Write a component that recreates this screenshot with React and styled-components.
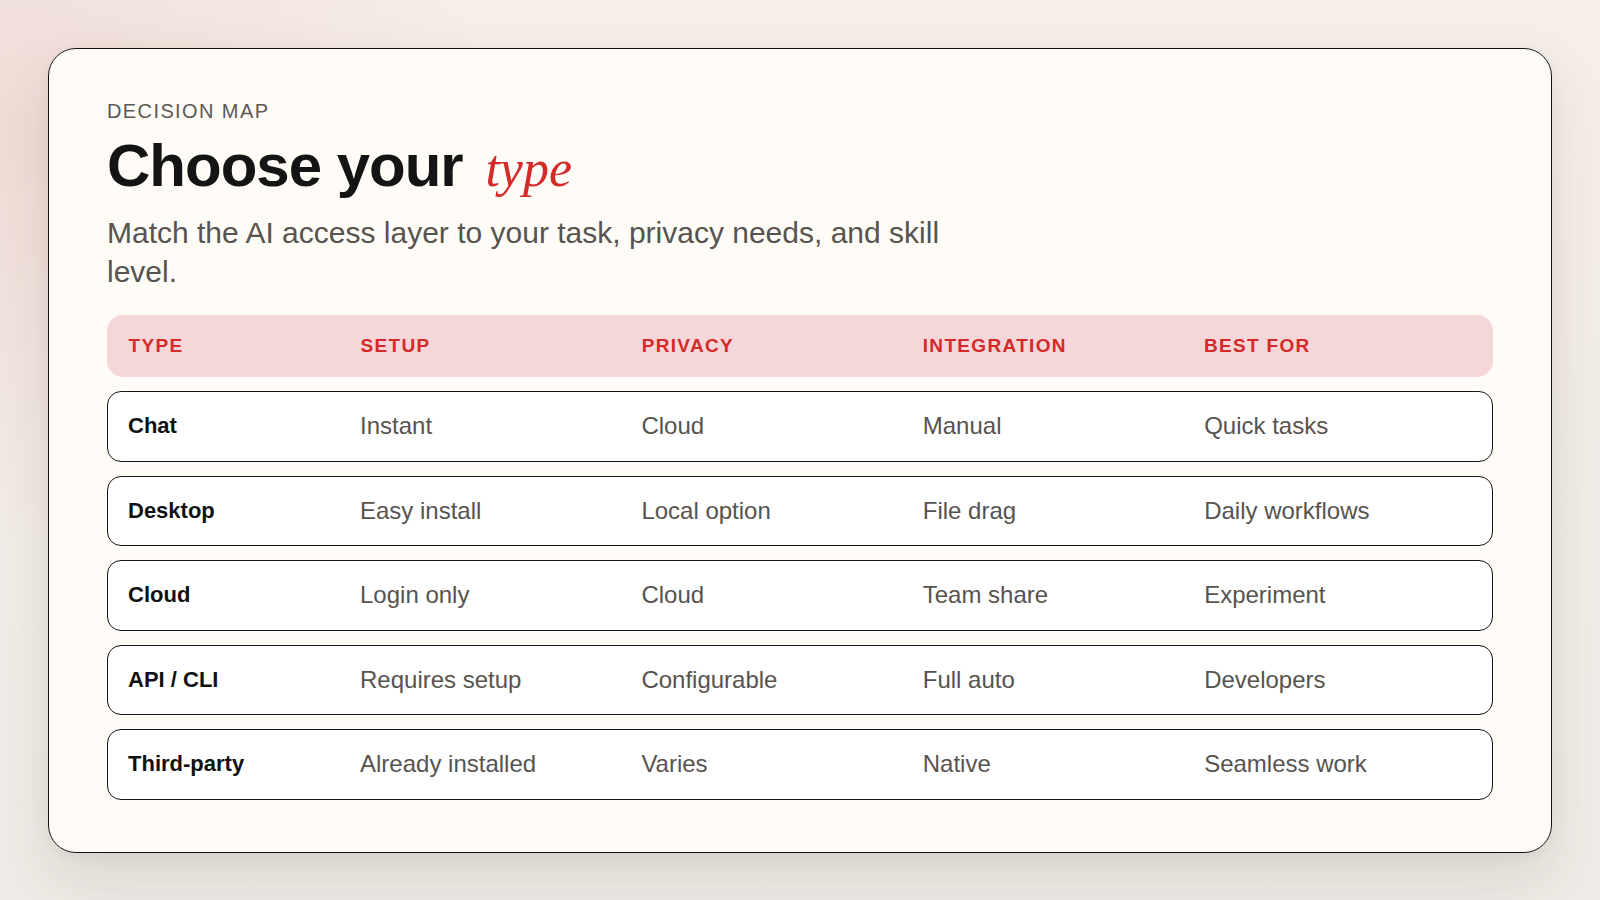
import styled, { createGlobalStyle } from "styled-components";

const rows = [
  { type: "Chat", setup: "Instant", privacy: "Cloud", integration: "Manual", best: "Quick tasks" },
  { type: "Desktop", setup: "Easy install", privacy: "Local option", integration: "File drag", best: "Daily workflows" },
  { type: "Cloud", setup: "Login only", privacy: "Cloud", integration: "Team share", best: "Experiment" },
  { type: "API / CLI", setup: "Requires setup", privacy: "Configurable", integration: "Full auto", best: "Developers" },
  { type: "Third-party", setup: "Already installed", privacy: "Varies", integration: "Native", best: "Seamless work" },
];

const columns = ["Type", "Setup", "Privacy", "Integration", "Best for"];

function App() {
  return (
    <>
      <GlobalStyle />
      <Page>
        <Card>
          <Eyebrow>Decision map</Eyebrow>
          <Title>
            Choose your <Accent>type</Accent>
          </Title>
          <Lead>
            Match the AI access layer to your task, privacy needs, and skill
            level.
          </Lead>
          <Table>
            <HeadRow>
              {columns.map((c) => (
                <HeadCell key={c}>{c}</HeadCell>
              ))}
            </HeadRow>
            {rows.map((r) => (
              <Row key={r.type}>
                <TypeCell>{r.type}</TypeCell>
                <Cell>{r.setup}</Cell>
                <Cell>{r.privacy}</Cell>
                <Cell>{r.integration}</Cell>
                <Cell>{r.best}</Cell>
              </Row>
            ))}
          </Table>
        </Card>
      </Page>
    </>
  );
}

export default App;

const GlobalStyle = createGlobalStyle`
  * {
    box-sizing: border-box;
  }
  html, body {
    margin: 0;
    padding: 0;
  }
  body {
    font-family: "Liberation Sans", Arial, sans-serif;
    background: #f3eee9;
  }
`;

const Page = styled.div`
  min-height: 900px;
  padding: 48px;
  background:
    radial-gradient(ellipse 700px 600px at 0% 15%, rgba(238, 214, 208, 0.75), rgba(238, 214, 208, 0) 70%),
    linear-gradient(180deg, #f6eee9 0%, #f2ede8 60%, #efebe6 100%);
`;

const Card = styled.div`
  background: #fffcf7;
  border: 1.5px solid #151515;
  border-radius: 28px;
  padding: 50px 58px 52px;
  box-shadow: 0 26px 60px rgba(80, 60, 40, 0.13), 0 4px 14px rgba(80, 60, 40, 0.05);
`;

const Eyebrow = styled.div`
  font-size: 20px;
  line-height: 24px;
  letter-spacing: 0.07em;
  text-transform: uppercase;
  color: #5c5854;
`;

const Title = styled.h1`
  margin: 11px 0 0;
  font-size: 60px;
  line-height: 63px;
  font-weight: 700;
  letter-spacing: -1px;
  color: #141414;
`;

const Accent = styled.em`
  font-family: "Liberation Serif", "Times New Roman", serif;
  font-style: italic;
  font-weight: 400;
  font-size: 52px;
  letter-spacing: 0;
  margin-left: 7px;
  color: #d42a2a;
`;

const Lead = styled.p`
  margin: 13px 0 0;
  max-width: 870px;
  font-size: 30px;
  line-height: 39px;
  color: #57534f;
`;

const Table = styled.div`
  margin-top: 24px;
  display: flex;
  flex-direction: column;
  gap: 14px;
`;

const grid = `
  display: grid;
  grid-template-columns: 220px repeat(4, 1fr);
  column-gap: 12px;
  align-items: center;
`;

const HeadRow = styled.div`
  ${grid}
  height: 62px;
  padding: 0 20px 0 21.5px;
  background: #f5d6d9;
  border-radius: 16px;
`;

const HeadCell = styled.div`
  font-size: 19px;
  font-weight: 700;
  letter-spacing: 0.07em;
  text-transform: uppercase;
  color: #d42a2a;
`;

const Row = styled.div`
  ${grid}
  height: 70.5px;
  padding: 0 18.5px 0 20px;
  background: #ffffff;
  border: 1.5px solid #151515;
  border-radius: 14px;
`;

const TypeCell = styled.div`
  font-size: 22px;
  font-weight: 700;
  color: #111111;
`;

const Cell = styled.div`
  font-size: 24px;
  color: #57534f;
`;
